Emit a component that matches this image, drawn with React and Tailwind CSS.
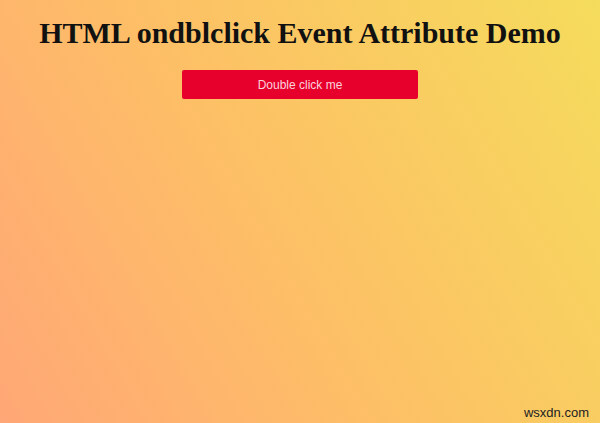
export default function App() {
    return (
        <div className="relative w-[600px] h-[423px] overflow-hidden bg-[linear-gradient(60deg,#ffa776_0%,#fdbf66_45%,#f5dc5c_100%)]">
            <h1 className="pt-[15px] text-center text-[30px] leading-[35px] font-bold text-[#111] font-['Liberation_Serif',serif]">
                HTML ondblclick Event Attribute Demo
            </h1>
            <div className="flex justify-center pt-[20px]">
                <button className="w-[236px] h-[29px] rounded-[2px] bg-[#e8002d] text-[12px] text-[#fbd3dc] font-['Liberation_Sans',sans-serif]">
                    Double click me
                </button>
            </div>
            <div className="absolute right-[11px] bottom-[1px] text-[13px] text-[#222] font-['Liberation_Sans',sans-serif]">
                wsxdn.com
            </div>
        </div>
    );
}
